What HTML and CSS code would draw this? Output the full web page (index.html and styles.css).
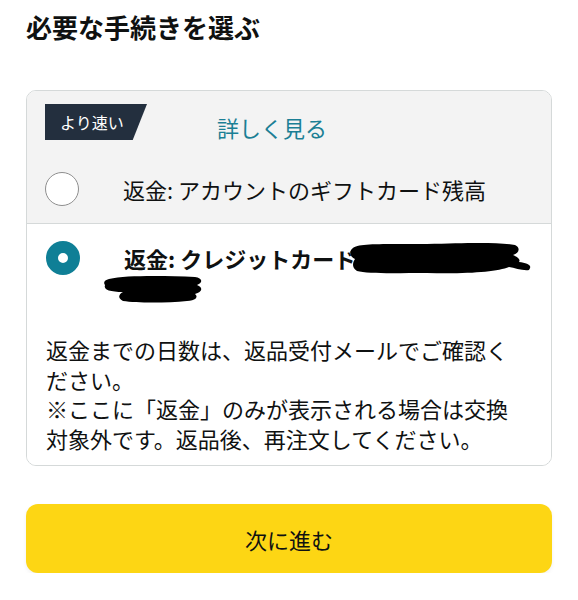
FILE: index.html
```html
<!DOCTYPE html>
<html lang="ja">
<head>
<meta charset="utf-8">
<link rel="stylesheet" href="styles.css">
</head>
<body>
<main class="page">
  <h1 class="title">必要な手続きを選ぶ</h1>
  <section class="card">
    <div class="card-top">
      <div class="top-bar">
        <span class="badge">より速い</span>
        <a class="link" href="#">詳しく見る</a>
      </div>
      <label class="option">
        <span class="radio"></span>
        <span class="option-label">返金: アカウントのギフトカード残高</span>
      </label>
    </div>
    <div class="card-selected">
      <label class="option option-on">
        <span class="radio radio-on"></span>
        <span class="option-label option-bold">返金: クレジットカード</span>
      </label>
      <svg class="redact" width="526" height="80" viewBox="0 0 526 80" aria-hidden="true">
        <path d="M326 22 C330 17 360 18 400 18 C440 17 470 16 488 19 C494 22 492 27 486 29 C490 31 494 33 492 36 C500 37 506 39 502 44 C496 45 488 42 482 41 C470 46 440 48 400 47 C370 47 340 48 330 45 C324 41 326 36 328 33 C322 30 322 25 326 22 Z" fill="#000"/>
        <path d="M82 53 C100 49 140 50 168 51 C176 52 176 57 170 59 C176 61 176 66 168 68 C172 71 168 75 160 75 C140 77 110 77 96 75 C90 72 92 68 96 66 C84 66 76 64 78 59 C76 56 78 54 82 53 Z" fill="#000"/>
      </svg>
      <p class="note">返金までの日数は、返品受付メールでご確認ください。<br>※ここに「返金」のみが表示される場合は交換対象外です。返品後、再注文してください。</p>
    </div>
  </section>
  <button class="next" type="button">次に進む</button>
</main>
</body>
</html>
```
FILE: styles.css
```css
* { box-sizing: border-box; }
html, body { margin: 0; padding: 0; background: #fff; }
body {
  font-family: "Noto Sans CJK JP", "Noto Sans", sans-serif;
  color: #0f1111;
}
.page {
  padding: 9px 26px 0 26px;
  display: flex;
  flex-direction: column;
}
.title {
  margin: 0;
  font-size: 26px;
  line-height: 36px;
  font-weight: 700;
}
.card {
  margin-top: 45px;
  border: 1px solid #d5d9d9;
  border-radius: 10px;
  overflow: hidden;
}
.card-top {
  background: #f3f3f3;
  border-bottom: 1px solid #d5d9d9;
  padding: 13px 18px 17px 18px;
}
.top-bar {
  display: flex;
  align-items: center;
  gap: 70px;
  height: 36px;
}
.badge {
  display: inline-flex;
  align-items: center;
  height: 36px;
  width: 102px;
  padding-left: 15px;
  background: #232f3e;
  color: #fff;
  font-size: 16px;
  clip-path: polygon(0 0, 100% 0, 86% 100%, 0 100%);
}
.link {
  color: #1b7f95;
  text-decoration: none;
  font-size: 22px;
  margin-top: 9px;
}
.option {
  display: flex;
  align-items: center;
  gap: 44px;
  margin-top: 32px;
}
.radio {
  flex: none;
  width: 34px;
  height: 34px;
  border-radius: 50%;
  background: #fff;
  border: 1.5px solid #8e8e8e;
}
.radio-on {
  background: #fff;
  border: 12px solid #0f7f96;
}
.option-label {
  font-size: 22px;
  line-height: 30px;
}
.option-bold { font-weight: 700; }
.card-selected {
  position: relative;
  background: #fff;
  padding: 17px 18px 12px 19px;
}
.option-on {
  margin-top: 0;
}
.redact {
  position: absolute;
  left: 0;
  top: 2px;
}
.note {
  margin: 60px 0 0 0;
  max-width: 470px;
  font-size: 22px;
  line-height: 29.5px;
}
.next {
  margin-top: 38px;
  height: 69px;
  border: none;
  border-radius: 12px;
  background: #fdd614;
  color: #0f1111;
  font-family: inherit;
  font-size: 22px;
  box-shadow: 0 2px 4px rgba(0,0,0,0.06);
}
```
